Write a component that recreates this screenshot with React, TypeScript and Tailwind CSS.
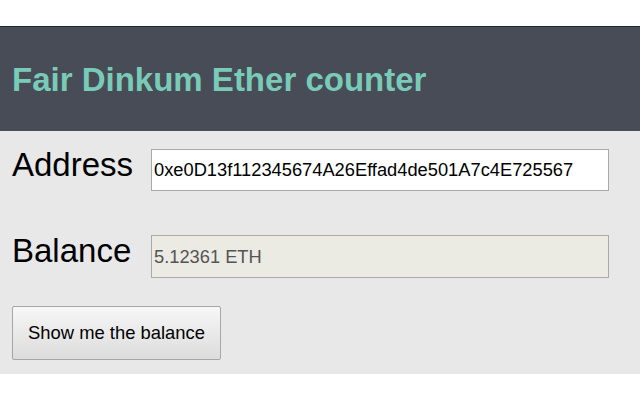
export default function App() {
  return (
    <div className="w-[640px] h-[400px] bg-white font-['Liberation_Sans',Arial,sans-serif]">
      <div className="h-[26px]" />
      {/* header */}
      <div className="h-[105px] border-t border-[#1e2530] bg-[#474c57] flex items-center px-[12px]">
        <h1 className="text-[33px] font-bold text-[#79cbb8] leading-none">Fair Dinkum Ether counter</h1>
      </div>

      {/* form */}
      <div className="bg-[#e8e8e8] pt-[18px] pb-[14px] px-[12px]">
        <div className="flex items-start">
          <label className="w-[139px] text-[33px] leading-[36px] mt-[-2px] text-black">Address</label>
          <input
            className="w-[458px] h-[42px] border border-[#aaaaaa] bg-white pl-[2px] text-[18.3px] text-black outline-none"
            defaultValue="0xe0D13f112345674A26Effad4de501A7c4E725567"
          />
        </div>

        <div className="flex items-start mt-[44px]">
          <label className="w-[139px] text-[33px] leading-[36px] mt-[-2px] text-black">Balance</label>
          <input
            disabled
            className="w-[458px] h-[43px] border border-[#aaaaaa] bg-[#ebebe4] pl-[2px] text-[18.3px] text-[#545454] outline-none"
            value="5.12361 ETH"
            readOnly
          />
        </div>

        <button className="mt-[28px] w-[209px] h-[54px] rounded-[2px] border border-[#a6a6a6] bg-gradient-to-b from-[#f7f7f7] to-[#dcdcdc] text-[18.4px] text-black">
          Show me the balance
        </button>
      </div>
    </div>
  );
}
